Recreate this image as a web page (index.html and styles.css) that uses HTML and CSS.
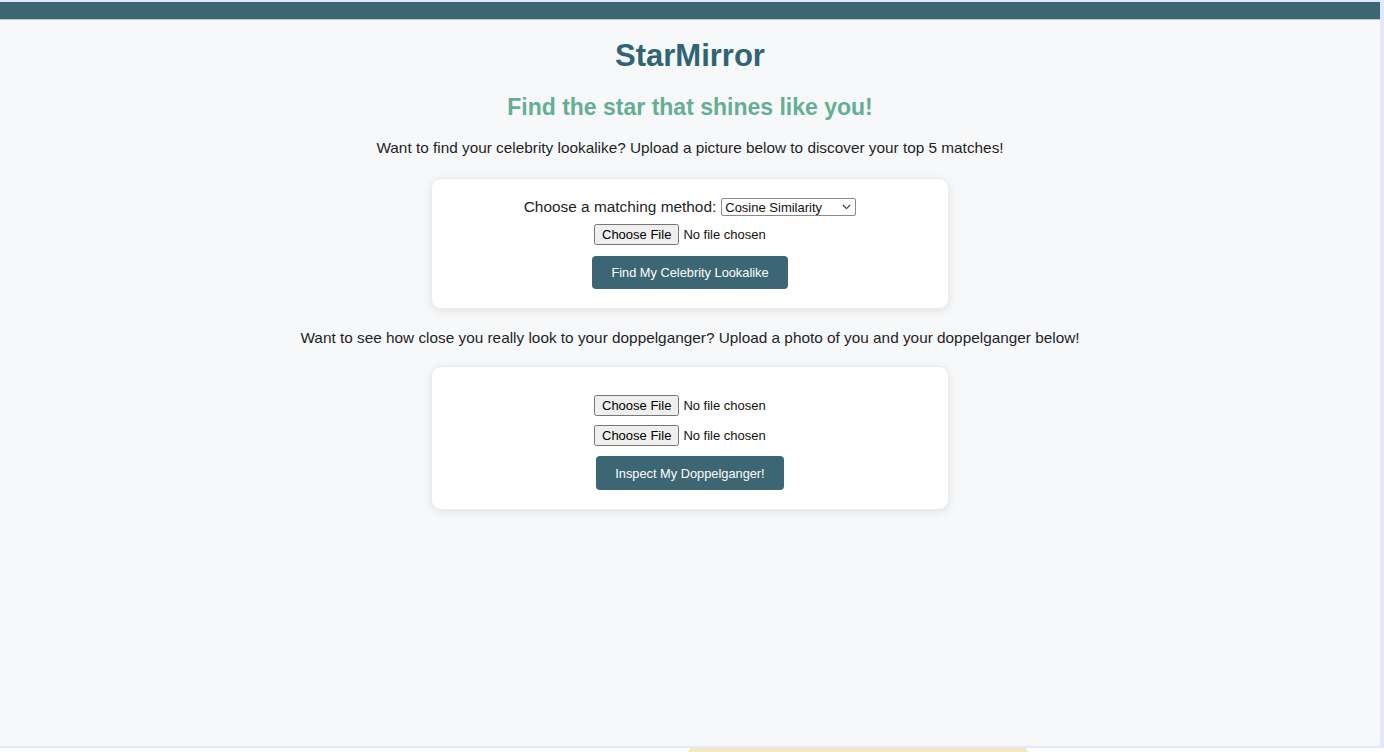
FILE: index.html
```html
<!DOCTYPE html>
<html lang="en">
<head>
<meta charset="utf-8">
<title>StarMirror</title>
<link rel="stylesheet" href="styles.css">
</head>
<body>
<div class="screen">
  <div class="topbar"></div>
  <main class="page">
    <h1 class="title">StarMirror</h1>
    <h2 class="tagline">Find the star that shines like you!</h2>
    <p class="intro">Want to find your celebrity lookalike? Upload a picture below to discover your top 5 matches!</p>
    <form class="card card-match">
      <div class="row">
        <label class="method-label" for="method">Choose a matching method:</label>
        <span class="select-wrap">
          <select id="method" class="method-select">
            <option>Cosine Similarity</option>
            <option>Euclidean Distance</option>
          </select>
          <svg class="chevron" width="9" height="6" viewBox="0 0 9 6" aria-hidden="true"><path d="M0.8 1 L4.5 4.6 L8.2 1" fill="none" stroke="#333" stroke-width="1.1"/></svg>
        </span>
      </div>
      <div class="row"><input type="file" class="file"></div>
      <div class="row"><button type="button" class="btn btn-find">Find My Celebrity Lookalike</button></div>
    </form>
    <p class="intro intro-2">Want to see how close you really look to your doppelganger? Upload a photo of you and your doppelganger below!</p>
    <form class="card card-compare">
      <div class="row"><input type="file" class="file"></div>
      <div class="row"><input type="file" class="file"></div>
      <div class="row"><button type="button" class="btn btn-inspect">Inspect My Doppelganger!</button></div>
    </form>
  </main>
</div>
<div class="dock"></div>
</body>
</html>
```

FILE: styles.css
```css
html, body {
  margin: 0;
  padding: 0;
  background: #ffffff;
  overflow: hidden;
}
body {
  width: 1384px;
  height: 752px;
  font-family: "Liberation Sans", Arial, sans-serif;
  color: #1f1f1f;
}
.screen {
  width: 1380px;
  height: 744px;
  border-top: 2px solid #e3e7fa;
  border-right: 4px solid #e3e7fa;
  border-bottom: 2px solid #e3e7fa;
  background: #f7f8fa;
  display: flex;
  flex-direction: column;
}
.topbar {
  height: 17px;
  background: #3d6675;
  border-bottom: 1px solid #b8c9d1;
  flex: none;
}
.page {
  display: flex;
  flex-direction: column;
  align-items: center;
}
.title {
  margin: 18px 0 0;
  font-size: 31px;
  line-height: 36px;
  font-weight: bold;
  color: #2f6475;
}
.tagline {
  margin: 20px 0 0;
  font-size: 23px;
  line-height: 27px;
  font-weight: bold;
  color: #65ae93;
}
.intro {
  margin: 18px 0 0;
  font-size: 15.35px;
  line-height: 18px;
}
.intro-2 {
  margin-top: 20px;
}
.card {
  box-sizing: border-box;
  width: 518px;
  margin-top: 21px;
  background: #ffffff;
  border: 1px solid #ececee;
  border-radius: 10px;
  box-shadow: 0 2px 8px rgba(0, 0, 0, 0.09);
  padding: 19px 0 19px;
  display: flex;
  flex-direction: column;
  align-items: center;
  gap: 8px;
}
.card-compare {
  margin-top: 19px;
  padding-top: 28px;
  gap: 9px;
}
.row {
  display: flex;
  align-items: center;
  justify-content: center;
}
.method-label {
  font-size: 15.4px;
  line-height: 18px;
  margin-right: 5px;
}
.select-wrap {
  position: relative;
  display: inline-flex;
}
.method-select {
  appearance: none;
  -webkit-appearance: none;
  font-family: "Liberation Sans", Arial, sans-serif;
  font-size: 13px;
  width: 135px;
  height: 18px;
  padding: 0 18px 0 3px;
  border: 1px solid #8a8a8a;
  border-radius: 2px;
  background: #ffffff;
  color: #111;
}
.chevron {
  position: absolute;
  right: 5px;
  top: 6px;
  pointer-events: none;
}
.file {
  font-family: "Liberation Sans", Arial, sans-serif;
  font-size: 13px;
  color: #111;
  width: 192px;
}
.btn {
  margin-top: 3px;
  font-family: "Liberation Sans", Arial, sans-serif;
  font-size: 12.8px;
  color: #ffffff;
  background: #3d6675;
  border: none;
  border-radius: 4px;
  height: 33px;
  padding: 0 19px;
  cursor: pointer;
}
.btn-inspect {
  margin-top: 1px;
  height: 34px;
}
.dock {
  margin-left: 688px;
  width: 340px;
  height: 4px;
  background: #f2e9c0;
  clip-path: polygon(2px 0, 338px 0, 340px 100%, 0 100%);
}
```
